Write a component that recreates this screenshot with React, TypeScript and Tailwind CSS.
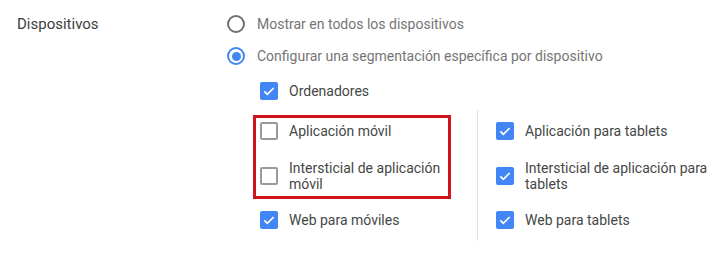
import React from 'react';

const Radio = ({ checked }: { checked?: boolean }) => (
  <span
    className={`flex h-[18px] w-[18px] shrink-0 items-center justify-center rounded-full border-2 ${
      checked ? 'border-[#4285f4]' : 'border-[#6f6f6f]'
    }`}
  >
    {checked && <span className="h-[9px] w-[9px] rounded-full bg-[#4285f4]" />}
  </span>
);

const Checkbox = ({ checked }: { checked?: boolean }) =>
  checked ? (
    <span className="flex h-[18px] w-[18px] shrink-0 items-center justify-center rounded-[2px] bg-[#4285f4]">
      <svg viewBox="0 0 24 24" className="h-[16px] w-[16px]" fill="none" stroke="white" strokeWidth={2.6}>
        <path d="M5 12.5l4.5 4.5L19 7.5" />
      </svg>
    </span>
  ) : (
    <span className="h-[18px] w-[18px] shrink-0 rounded-[2px] border-2 border-[#9a9a9a]" />
  );

const CheckRow = ({ label, checked }: { label: React.ReactNode; checked?: boolean }) => (
  <div className="flex items-center gap-[11px]">
    <Checkbox checked={checked} />
    <span className="leading-[16px] text-[#444746]">{label}</span>
  </div>
);

export default function App() {
  return (
    <div className="h-[255px] w-[723px] bg-white pt-[14px] text-[14px] font-['Roboto','Liberation_Sans',sans-serif]">
      <div className="flex">
        <div className="w-[227px] shrink-0 pl-[17px] text-[15px] leading-[20px] text-[#3c4043]">Dispositivos</div>

        <div className="flex flex-col">
          <div className="flex h-[20px] items-center gap-[12px]">
            <Radio />
            <span className="text-[#757575]">Mostrar en todos los dispositivos</span>
          </div>
          <div className="mt-[12px] flex h-[20px] items-center gap-[12px]">
            <Radio checked />
            <span className="text-[#757575]">Configurar una segmentación específica por dispositivo</span>
          </div>

          <div className="ml-[33px] mt-[15px] flex flex-col">
            <div className="flex h-[20px] items-center">
              <CheckRow label="Ordenadores" checked />
            </div>

            <div className="mt-[9px] flex">
              {/* Mobile column */}
              <div className="relative flex w-[217px] flex-col py-[11px] pr-[20px]">
                <div className="flex h-[20px] items-center">
                  <CheckRow label="Aplicación móvil" />
                </div>
                <div className="mt-[18px] flex h-[34px] items-center">
                  <CheckRow label={<>Intersticial de aplicación<br />móvil</>} />
                </div>
                <div className="mt-[17px] flex h-[20px] items-center">
                  <CheckRow label="Web para móviles" checked />
                </div>
                <div className="pointer-events-none absolute left-[-7px] top-[5px] h-[84px] w-[198px] border-[3px] border-[#d0141c]" />
              </div>

              {/* Tablet column */}
              <div className="flex flex-col border-l border-[#e0e0e0] py-[11px] pl-[18px]">
                <div className="flex h-[20px] items-center">
                  <CheckRow label="Aplicación para tablets" checked />
                </div>
                <div className="mt-[18px] flex h-[34px] items-center">
                  <CheckRow label={<>Intersticial de aplicación para<br />tablets</>} checked />
                </div>
                <div className="mt-[17px] flex h-[20px] items-center">
                  <CheckRow label="Web para tablets" checked />
                </div>
              </div>
            </div>
          </div>
        </div>
      </div>
    </div>
  );
}
